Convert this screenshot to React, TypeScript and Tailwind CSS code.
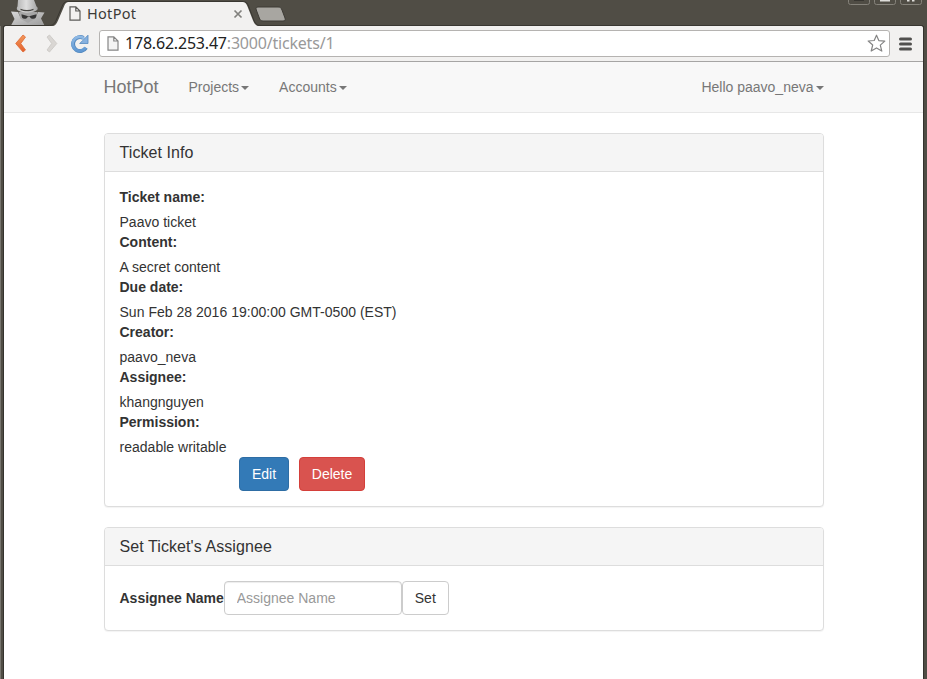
import React from "react";

const fields = [
  ["Ticket name:", "Paavo ticket"],
  ["Content:", "A secret content"],
  ["Due date:", "Sun Feb 28 2016 19:00:00 GMT-0500 (EST)"],
  ["Creator:", "paavo_neva"],
  ["Assignee:", "khangnguyen"],
  ["Permission:", "readable writable"],
];

function PageIcon({ light = false }: { light?: boolean }) {
  return (
    <svg width="12" height="15" viewBox="0 0 12 15" className="block shrink-0">
      <path
        d="M1 .8h5.8L11 5v9.2H1z M6.8.8V5H11"
        fill={light ? "#f4f4f4" : "none"}
        stroke={light ? "#858585" : "#5c5c59"}
        strokeWidth="1.2"
      />
    </svg>
  );
}

function Incognito() {
  return (
    <svg width="35" height="25" viewBox="0 0 35 25" className="block">
      <defs>
        <linearGradient id="coat" x1="0" x2="1" y1="0" y2="1">
          <stop offset="0" stopColor="#d8d8d8" />
          <stop offset="1" stopColor="#9c9c9c" />
        </linearGradient>
        <linearGradient id="hat" x1="0" x2="1" y1="0" y2="0">
          <stop offset="0" stopColor="#b4b4b4" />
          <stop offset=".45" stopColor="#dedede" />
          <stop offset="1" stopColor="#a4a4a4" />
        </linearGradient>
      </defs>
      <path d="M8.500 12h19l-2 8-7.500 5-7-5z" fill="#a6a6a6" />
      <path d="M1 11.500l7 .5 3 7 7 4 7-4 3-7 6.500.5-3.500 6 3.500 7H1l3.500-6.500z" fill="url(#coat)" />
      <path d="M8 0h16l2.500 6.500c1 .5 1.500 1.500 1 3-1.500 2-5 3-10 3s-9-1-10.500-3c-.5-1.500 0-2.500.5-3z" fill="url(#hat)" />
      <path d="M10.500 8.800c4 1.700 9 1.700 13 0v1.200c-4 1.800-9 1.800-13 0z" fill="#454441" />
      <path d="M11.500 14.300l6 1.700h2.500l6.500-1.700c0 3.200-1 4.500-3.300 4.500-2 0-3-.8-3.400-2.300h-2c-.5 1.500-1.400 2.300-3.300 2.300-2.200 0-3-1.500-3-4.500z" fill="#363636" />
    </svg>
  );
}

function TabStrip() {
  return (
    <div className="relative h-[26px] w-full overflow-hidden bg-[#504d45]">
      <div className="absolute left-[10px] top-0">
        <Incognito />
      </div>
      <svg width="927" height="26" viewBox="0 0 927 26" className="absolute left-0 top-0">
        <path d="M4 25.500H48c5 0 6-1 8-5l6-14c1.500-3.500 2.500-5 6-5H242c4 0 5 1 6.500 4.500l5.500 14.500c2 4 3 5 7 5H923" fill="none" stroke="#393731" />
        <path d="M4 26.500H49c6 0 7-1.500 9-6l6-14c1.500-3.500 2.500-4.500 5-4.500H242c3 0 4 1 5.500 4.500l5.500 14c2 4.500 4 6 8 6z" fill="#f2f1f0" />
        <path d="M258 7h20c2 0 3 .5 4 3l3 8c.7 2 0 3-2 3h-20c-2 0-3-1-3.700-3l-3-8c-.7-2 0-3 1.700-3z" fill="#a8a6a1" stroke="#3d3b35" />
        <path d="M234.500 10.500l7 7m0-7l-7 7" stroke="#82817e" strokeWidth="1.700" />
        <g fill="none" stroke="#85827a">
          <path d="M848.500 0v2.500q0 2 2 2h17q2 0 2-2V0M874.500 0v2.500q0 2 2 2h17q2 0 2-2V0M900.500 0v2.500q0 2 2 2h17q2 0 2-2V0" />
        </g>
        <path d="M854 0h10" stroke="#302f2b" strokeWidth="1.500" />
        <path d="M880 0h10v1.500h-10zM907 0h2.500v1.500h-2.500zM912 0h2.500v1.500h-2.500z" fill="#deddda" />
      </svg>
      <div className="absolute left-[69px] top-[6px] flex items-center">
        <PageIcon />
      </div>
      <span className="absolute left-[87px] top-[3px] font-['Noto_Sans',sans-serif] text-[14.500px] leading-5 tracking-[0.3px] text-[#3c3b37]">
        HotPot
      </span>
    </div>
  );
}

function Toolbar() {
  return (
    <div className="flex h-9 items-center border-b border-[#a6a5a4] bg-[#f2f1f0] pl-[6px] pr-[11px]">
      <svg width="80" height="24" viewBox="0 0 80 24" className="mr-[9px] shrink-0">
        <defs>
          <linearGradient id="back" x1="0" x2="0" y1="0" y2="1">
            <stop offset="0" stopColor="#f39a5c" />
            <stop offset="1" stopColor="#e2602c" />
          </linearGradient>
          <linearGradient id="reload" x1="0" x2="0" y1="0" y2="1">
            <stop offset="0" stopColor="#8fb9e4" />
            <stop offset="1" stopColor="#6199d3" />
          </linearGradient>
        </defs>
        <path d="M13 3L5.700 11.500l7.300 8.500 2.500-2-4.700-6.500 4.700-6.500z" fill="url(#back)" stroke="#df6a35" strokeWidth=".8" strokeLinejoin="round" />
        <path d="M39.500 3L46.800 11.500l-7.300 8.500-2.500-2 4.700-6.500-4.700-6.500z" fill="#d9d6d3" stroke="#c9c6c3" strokeWidth=".8" strokeLinejoin="round" />
        <path d="M76 15.800A7 7 0 1 1 73.500 6" fill="none" stroke="#5489bf" strokeWidth="4" />
        <path d="M78 3.200v8.300h-8.300l2.800-2.800L75.500 5.700z" fill="#86b1df" stroke="#5489bf" strokeWidth=".8" />
        <path d="M75.600 15.500A7 7 0 1 1 74 6.300" fill="none" stroke="url(#reload)" strokeWidth="2.800" />
      </svg>
      <div className="flex h-[27px] flex-1 items-center rounded-[3px] border border-[#b5b3b1] bg-white pl-[7px] pr-[3px]">
        <PageIcon light />
        <span className="-mt-[2px] ml-[6px] flex-1 whitespace-nowrap font-['Noto_Sans',sans-serif] text-[16px] leading-6 tracking-[-0.2px] text-[#222]">
          178.62.253.47<span className="text-[#999]">:3000/tickets/1</span>
        </span>
        <svg width="19" height="19" viewBox="0 0 19 19">
          <path d="M9.500 1.200l2.300 5.400 6 .5-4.500 4 1.500 6-5.300-3.200L4.200 17l1.500-6-4.500-4 6-.5z" fill="#fff" stroke="#858585" strokeWidth="1.200" strokeLinejoin="round" />
        </svg>
      </div>
      <svg width="13" height="14" viewBox="0 0 13 14" className="ml-[9px] shrink-0">
        <path d="M1.500 2h10M1.500 7h10M1.500 12h10" stroke="#51504e" strokeWidth="3" strokeLinecap="round" />
      </svg>
    </div>
  );
}

function MenuLabel({ children }: { children: React.ReactNode }) {
  return (
    <span className="flex items-center text-sm leading-5">
      {children}
      <span className="ml-[2px] mt-[1px] h-0 w-0 border-x-4 border-t-4 border-x-transparent border-t-[#777]" />
    </span>
  );
}

function Panel({ title, children }: { title: string; children: React.ReactNode }) {
  return (
    <section className="mb-5 rounded-[4px] border border-[#ddd] bg-white shadow-[0_1px_1px_rgba(0,0,0,0.05)]">
      <h3 className="rounded-t-[3px] border-b border-[#ddd] bg-[#f5f5f5] px-[15px] py-[10px] text-base leading-[17px] tracking-[0.08px]">
        {title}
      </h3>
      <div className="p-[15px]">{children}</div>
    </section>
  );
}

export default function App() {
  return (
    <div className="flex h-[679px] w-[927px] flex-col overflow-hidden bg-[#504d45] font-['Liberation_Sans',Arial,sans-serif] text-sm leading-5 text-[#333]">
      <TabStrip />
      <div className="flex min-h-0 flex-1 border-l border-[#77756e]">
        <div className="w-[3px] shrink-0 border-r border-[#35332e] bg-[#504d45]" />
        <div className="w-[919px] overflow-hidden rounded-t-[3px] bg-white">
          <Toolbar />
          <nav className="h-[51px] border-b border-[#e7e7e7] bg-[#f8f8f8]">
            <div className="mx-auto flex h-[50px] w-[720px] items-center text-[#777]">
              <span className="mr-[30px] text-lg leading-5">HotPot</span>
              <div className="flex gap-[30px]">
                <MenuLabel>Projects</MenuLabel>
                <MenuLabel>Accounts</MenuLabel>
              </div>
              <div className="ml-auto">
                <MenuLabel>Hello paavo_neva</MenuLabel>
              </div>
            </div>
          </nav>
          <main className="mx-auto w-[720px] pt-5">
            <Panel title="Ticket Info">
              <dl>
                {fields.map(([label, value]) => (
                  <React.Fragment key={label}>
                    <dt className="mb-[5px] font-bold">{label}</dt>
                    <dd className="tracking-[0.02px]">{value}</dd>
                  </React.Fragment>
                ))}
              </dl>
              <div className="ml-[119px] flex gap-[10px]">
                <button className="h-[34px] w-[50px] rounded-[4px] border border-[#2e6da4] bg-[#337ab7] pl-px text-white">Edit</button>
                <button className="h-[34px] w-[66px] rounded-[4px] border border-[#d43f3a] bg-[#d9534f] pl-px text-white">Delete</button>
              </div>
            </Panel>
            <Panel title="Set Ticket's Assignee">
              <form className="flex items-center">
                <label htmlFor="assignee" className="font-bold">Assignee Name</label>
                <input
                  id="assignee"
                  placeholder="Assignee Name"
                  className="h-[34px] w-[178px] rounded-[4px] border border-[#ccc] px-3 shadow-[inset_0_1px_1px_rgba(0,0,0,0.075)] placeholder:text-[#999]"
                />
                <button type="button" className="h-[34px] rounded-[4px] border border-[#ccc] bg-white px-3">Set</button>
              </form>
            </Panel>
          </main>
        </div>
        <div className="flex-1 border-l border-[#35332e] bg-[#504d45]" />
      </div>
    </div>
  );
}
